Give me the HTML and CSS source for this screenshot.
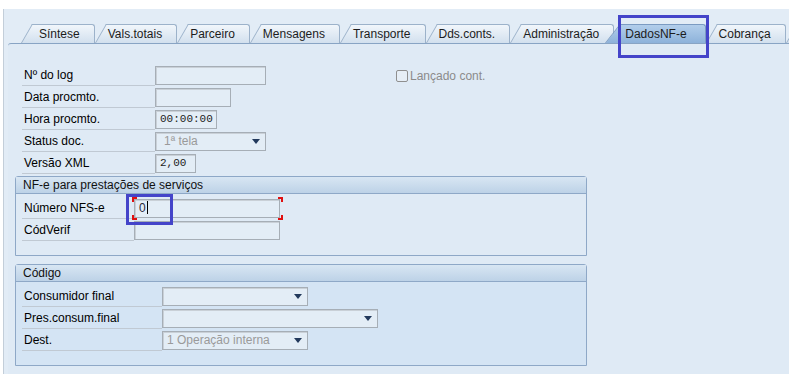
FILE: index.html
```html
<!DOCTYPE html>
<html lang="pt">
<head>
    <meta charset="UTF-8">
    <meta name="viewport" content="width=device-width, initial-scale=1.0">
    <title>DadosNF-e</title>
    <link rel="stylesheet" href="styles.css">
</head>
<body>
    <div class="window">
        <div class="tabs">
            <div class="tab first">Síntese</div>
            <div class="tab">Vals.totais</div>
            <div class="tab">Parceiro</div>
            <div class="tab">Mensagens</div>
            <div class="tab">Transporte</div>
            <div class="tab">Dds.conts.</div>
            <div class="tab">Administração</div>
            <div class="tab active">DadosNF-e</div>
            <div class="tab">Cobrança</div>
            <div class="tab more"></div>
        </div>

        <div class="panel">
            <div class="top-fields">
                <div class="row">
                    <span class="label">Nº do log</span>
                    <span class="field w111"></span>
                    <span class="check"><span class="box"></span>Lançado cont.</span>
                </div>
                <div class="row">
                    <span class="label">Data procmto.</span>
                    <span class="field w76"></span>
                </div>
                <div class="row">
                    <span class="label">Hora procmto.</span>
                    <span class="field w62 mono">00:00:00</span>
                </div>
                <div class="row">
                    <span class="label">Status doc.</span>
                    <span class="field w111 select disabled status">1ª tela</span>
                </div>
                <div class="row">
                    <span class="label">Versão XML</span>
                    <span class="field w41 mono">2,00</span>
                </div>
            </div>

            <div class="group">
                <div class="group-head">NF-e para prestações de serviços</div>
                <div class="group-body nfs">
                    <div class="row">
                        <span class="label">Número NFS-e</span>
                        <span class="field w146 focus">0<span class="caret"></span><span class="corners"></span></span>
                    </div>
                    <div class="row">
                        <span class="label">CódVerif</span>
                        <span class="field w146"></span>
                    </div>
                </div>
            </div>

            <div class="group alt">
                <div class="group-head">Código</div>
                <div class="group-body codigo">
                    <div class="row">
                        <span class="label">Consumidor final</span>
                        <span class="field w146 select"></span>
                    </div>
                    <div class="row">
                        <span class="label">Pres.consum.final</span>
                        <span class="field w216 select"></span>
                    </div>
                    <div class="row">
                        <span class="label">Dest.</span>
                        <span class="field w146 select disabled">1 Operação interna</span>
                    </div>
                </div>
            </div>
        </div>

        <!-- marcações azuis do print -->
        <div class="mark mark-tab"></div>
        <div class="mark mark-field"></div>
    </div>
</body>
</html>
```

FILE: styles.css
```css
body {
    margin: 0;
    background-color: #ffffff;
    font-family: "Liberation Sans", Arial, sans-serif;
    font-size: 12px;
    color: #000000;
}

.window {
    position: relative;
    margin: 9px 2px 0 3px;
    height: 365px;
    background-color: #e2ecf6;
    border-left: 1px solid #c3ced9;
    overflow: hidden;
}

/* abas */
.tabs {
    display: flex;
    height: 34px;
    box-sizing: border-box;
    padding: 15px 0 0 17px;
}

.tab {
    position: relative;
    z-index: 1;
    flex-shrink: 0;
    margin-left: 11px;
    height: 19px;
    box-sizing: border-box;
    padding: 0 14px 0 2px;
    border-top: 1px solid #9cb2ca;
    border-right: 1px solid #9cb2ca;
    border-radius: 0 3px 0 0;
    background: linear-gradient(#f1f6fb, #d2e0ee);
    line-height: 19px;
    color: #1c1c1c;
    white-space: nowrap;
}

.tab::before {
    content: "";
    position: absolute;
    z-index: -1;
    left: -11px;
    top: -1px;
    bottom: 0;
    width: 16px;
    border-top: 1px solid #9cb2ca;
    border-left: 1px solid #9cb2ca;
    background: inherit;
    transform-origin: 0 100%;
    transform: skewX(-30deg);
}

.tab.first {
    padding-left: 7px;
}

.tab.active {
    z-index: 2;
    margin-left: 6px;
    padding: 0 18px 0 5px;
    background: linear-gradient(#b2ceeb, #8db2da);
    border-color: #7b9bc2;
}

.tab.active::before {
    left: -15px;
    width: 20px;
    border-color: #7b9bc2;
    transform: skewX(-38deg);
}

.tab.more {
    width: 40px;
}

/* painel */
.panel {
    margin-left: 4px;
    border-top: 1px solid #88a4c4;
    border-top-left-radius: 3px;
    background-color: #dfeaf5;
    padding: 20px 0 8px 7px;
    height: 100%;
}

.top-fields {
    margin-left: 7px;
}

.row {
    display: flex;
    align-items: flex-start;
    height: 22px;
}

.label {
    flex-shrink: 0;
    box-sizing: border-box;
    height: 22px;
    line-height: 23px;
    padding-left: 2px;
    border-bottom: 1px solid #c0c9d3;
    white-space: nowrap;
    overflow: hidden;
}

.top-fields .label {
    width: 133px;
}

.nfs .label {
    width: 112px;
}

.codigo .label {
    width: 140px;
}

.field {
    flex-shrink: 0;
    box-sizing: border-box;
    margin-top: 2px;
    height: 19px;
    padding: 0 4px;
    border: 1px solid #a6aeb6;
    box-shadow: inset 1px 1px 0 #c9d0d7;
    background-color: #e3edf6;
    line-height: 17px;
    color: #2a2a3a;
    white-space: nowrap;
}

.w41 { width: 41px; }
.w62 { width: 62px; }
.w76 { width: 76px; }
.w111 { width: 111px; }
.w146 { width: 146px; }
.w216 { width: 216px; }

.mono {
    font-family: "Liberation Mono", monospace;
    font-size: 11px;
    color: #222222;
}

.select {
    display: flex;
    align-items: center;
}

.select::after {
    content: "";
    margin-left: auto;
    margin-right: 1px;
    border-left: 4px solid transparent;
    border-right: 4px solid transparent;
    border-top: 5px solid #22395c;
}

.disabled {
    color: #9a9a9a;
}

.status {
    padding-left: 8px;
}

.check {
    display: flex;
    align-items: center;
    gap: 2px;
    margin: 6px 0 0 130px;
    line-height: 12px;
    color: #8b8b8b;
}

.check .box {
    width: 12px;
    height: 12px;
    box-sizing: border-box;
    border: 1px solid #8f8f8f;
    border-radius: 2px;
    background-color: #e6eef6;
}

/* campo com foco */
.focus {
    position: relative;
}

.caret {
    display: inline-block;
    width: 1px;
    height: 13px;
    margin-left: 1px;
    background-color: #000000;
    vertical-align: -2px;
}

.corners {
    position: absolute;
    left: -3px;
    top: -3px;
    right: -4px;
    bottom: -3px;
    background:
        linear-gradient(#e01010, #e01010) left top / 5px 2px no-repeat,
        linear-gradient(#e01010, #e01010) left top / 2px 5px no-repeat,
        linear-gradient(#e01010, #e01010) right top / 5px 2px no-repeat,
        linear-gradient(#e01010, #e01010) right top / 2px 5px no-repeat,
        linear-gradient(#e01010, #e01010) left bottom / 5px 2px no-repeat,
        linear-gradient(#e01010, #e01010) left bottom / 2px 5px no-repeat,
        linear-gradient(#e01010, #e01010) right bottom / 5px 2px no-repeat,
        linear-gradient(#e01010, #e01010) right bottom / 2px 5px no-repeat;
}

/* grupos */
.group {
    width: 572px;
    box-sizing: border-box;
    margin-top: 2px;
    border: 1px solid #8ea8c7;
    border-radius: 3px 3px 0 0;
}

.group + .group {
    margin-top: 8px;
}

.group-head {
    height: 17px;
    box-sizing: border-box;
    padding-left: 7px;
    border-bottom: 1px solid #8ea8c7;
    background: linear-gradient(#d8e6f3, #bdd2e7);
    line-height: 17px;
    color: #111111;
}

.group-body {
    padding: 3px 0 14px 6px;
}

.group.alt .group-body {
    background-color: #d4e4f4;
}

/* marcações */
.mark {
    position: absolute;
    z-index: 5;
    box-sizing: border-box;
    border: 3px solid #4444c9;
}

.mark-tab {
    left: 614px;
    top: 6px;
    width: 91px;
    height: 43px;
}

.mark-field {
    left: 122px;
    top: 185px;
    width: 47px;
    height: 31px;
}
```
